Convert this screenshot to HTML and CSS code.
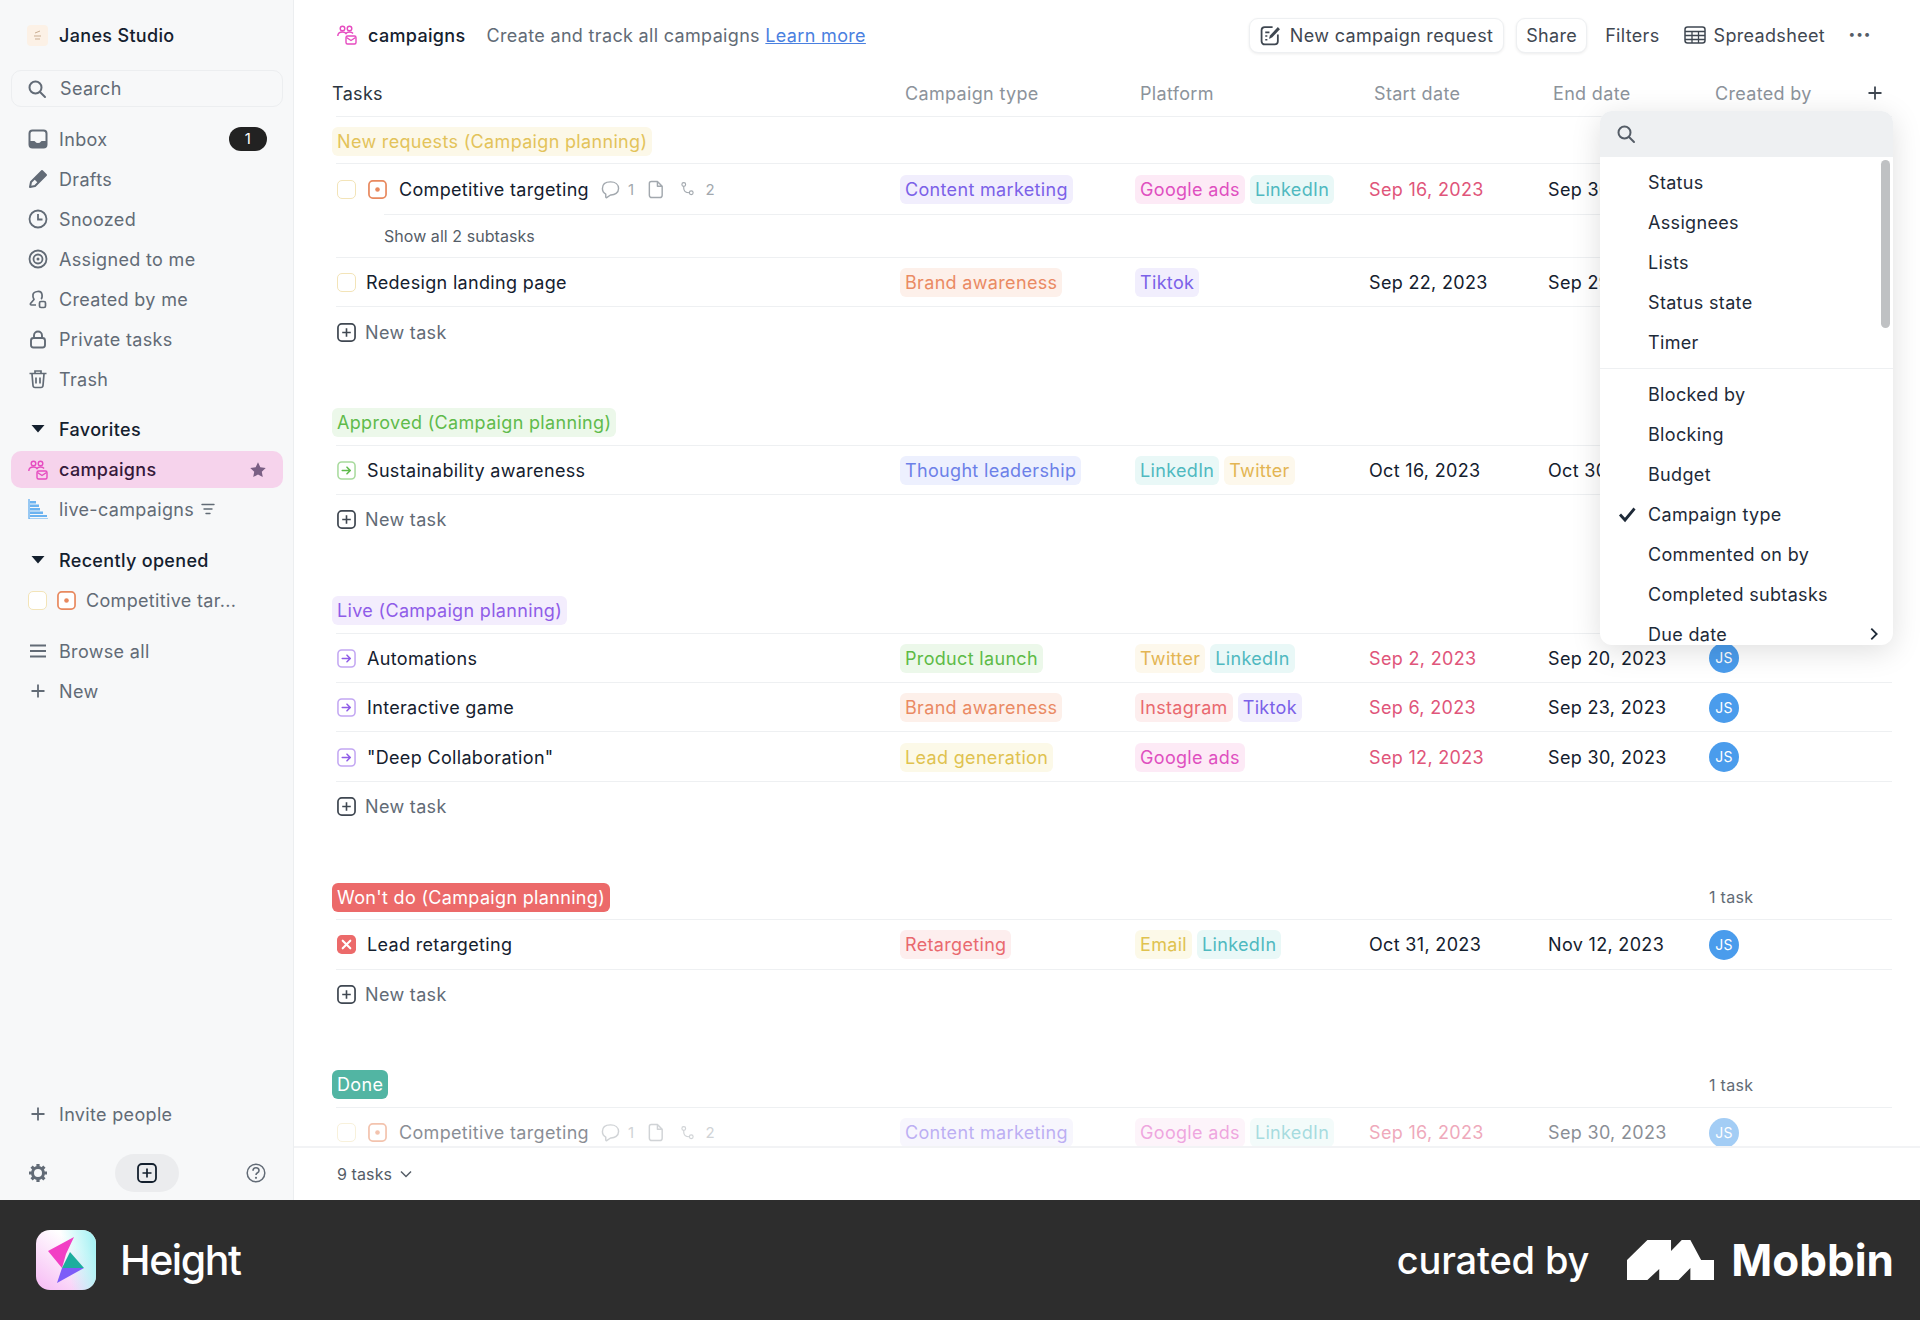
FILE: index.html
```html
<!DOCTYPE html>
<html>
<head>
    <title>campaigns - Height</title>
    <link rel="stylesheet" href="styles.css">
</head>
<body>
    <svg class="sprite" width="0" height="0">
        <symbol id="i-search" viewBox="0 0 20 20"><circle cx="8.5" cy="8.5" r="6" fill="none" stroke="currentColor" stroke-width="2"/><path d="M13 13l5 5" stroke="currentColor" stroke-width="2" stroke-linecap="round"/></symbol>
        <symbol id="i-inbox" viewBox="0 0 20 20"><rect x="1.5" y="1.5" width="17" height="17" rx="3" fill="none" stroke="currentColor" stroke-width="2"/><path d="M1.5 12H6q1 0 1.5 1t2.5 1 2.5-1 1.5-1h4.500v4a2.500 2.500 0 0 1-2.500 2.500H4A2.500 2.500 0 0 1 1.500 16z" fill="currentColor"/></symbol>
        <symbol id="i-pencil" viewBox="0 0 20 20"><path d="M14 2l4 4L7 17l-5 1 1-5z" fill="none" stroke="currentColor" stroke-width="2" stroke-linejoin="round"/><path d="M14 2l4 4-8 8-4-4z" fill="currentColor"/></symbol>
        <symbol id="i-clock" viewBox="0 0 20 20"><circle cx="10" cy="10" r="8.500" fill="none" stroke="currentColor" stroke-width="1.800"/><path d="M10 5v5.500h4.500" fill="none" stroke="currentColor" stroke-width="1.800"/></symbol>
        <symbol id="i-target" viewBox="0 0 20 20"><circle cx="10" cy="10" r="8.500" fill="none" stroke="currentColor" stroke-width="1.800"/><circle cx="10" cy="10" r="4.500" fill="none" stroke="currentColor" stroke-width="1.800"/><circle cx="10" cy="10" r="1.500" fill="currentColor"/></symbol>
        <symbol id="i-creator" viewBox="0 0 20 20"><path d="M8 16H3.500q-1.500 0-1-1.500L6 10.500Q4.500 8 5 5.500T9.500 2.500 14 5.500 13 10" fill="none" stroke="currentColor" stroke-width="1.700" stroke-linejoin="round"/><rect x="11.500" y="12.500" width="6" height="6" rx="1.500" fill="none" stroke="currentColor" stroke-width="1.700"/></symbol>
        <symbol id="i-lock" viewBox="0 0 20 20"><rect x="3" y="9" width="14" height="9.500" rx="2.500" fill="none" stroke="currentColor" stroke-width="1.900"/><path d="M6 9V6.500a4 4 0 0 1 8 0V9" fill="none" stroke="currentColor" stroke-width="1.900"/></symbol>
        <symbol id="i-trash" viewBox="0 0 20 20"><path d="M1.500 4.500h17M7 4V2h6v2M4 5l1 11.500q.2 2 2 2h6q1.800 0 2-2L16 5M8 8.500v6M12 8.500v6" fill="none" stroke="currentColor" stroke-width="1.700"/></symbol>
        <symbol id="i-caret" viewBox="0 0 20 20"><path d="M3.500 6h13L10 13.500z" fill="currentColor"/></symbol>
        <symbol id="i-campaign" viewBox="0 0 20 20"><g fill="none" stroke="currentColor" stroke-width="1.400"><circle cx="5.500" cy="3.500" r="2.300"/><circle cx="12.500" cy="3.500" r="2.300"/><path d="M.8 11q0-4 4.700-4 2.500 0 3.500 1.500Q10 7 12.500 7q2.500 0 3.500 1.500"/><rect x="9" y="11" width="10" height="8" rx="1.500"/><path d="M9.500 12.500L14 15.500l4.500-3"/></g></symbol>
        <symbol id="i-bars" viewBox="0 0 20 20"><path d="M1 0v20h19" fill="none" stroke="currentColor" stroke-width="1.200"/><path d="M2 2h6v2.500H2zM2 5.500h9V8H2zM2 9h10v2.500H2zM2 12.500h13V15H2zM2 16h17v2H2z" fill="currentColor" opacity=".88"/></symbol>
        <symbol id="i-filter" viewBox="0 0 14 12"><path d="M1 1.500h12M3 6h8M5 10.500h4" stroke="currentColor" stroke-width="1.400" stroke-linecap="round"/></symbol>
        <symbol id="i-star" viewBox="0 0 20 20"><path d="M10 1.500l2.600 5.500 6 .8-4.400 4.100 1.100 6L10 15l-5.300 2.900 1.100-6L1.400 7.800l6-.8z" fill="currentColor"/></symbol>
        <symbol id="i-target-task" viewBox="0 0 20 20"><rect x="1" y="1" width="18" height="18" rx="4" fill="#fff" stroke="currentColor" stroke-width="1.800"/><circle cx="10" cy="10" r="2.400" fill="currentColor"/></symbol>
        <symbol id="i-arrow-task" viewBox="0 0 20 20"><rect x="1" y="1" width="18" height="18" rx="4" fill="none" stroke="currentColor" stroke-opacity=".55" stroke-width="1.600"/><path d="M5.500 10h8.500M10.500 6.500L14 10l-3.500 3.500" fill="none" stroke="currentColor" stroke-width="1.600" stroke-linecap="round" stroke-linejoin="round"/></symbol>
        <symbol id="i-x-task" viewBox="0 0 20 20"><rect x="0" y="0" width="20" height="20" rx="5" fill="currentColor"/><path d="M6 6l8 8M14 6l-8 8" stroke="#fff" stroke-width="2.200" stroke-linecap="round"/></symbol>
        <symbol id="i-comment" viewBox="0 0 20 20"><path d="M10 2c5 0 8.500 2.700 8.500 7s-4 7-8.500 6.800L6 18.500q-1 .5-1-1v-2.700Q1.500 13 1.500 9 1.500 2 10 2z" fill="none" stroke="currentColor" stroke-width="1.500" stroke-linejoin="round"/></symbol>
        <symbol id="i-doc" viewBox="0 0 16 20"><path d="M3 1.500h6.500l5 5V16a2.500 2.500 0 0 1-2.500 2.500H3.500A2.500 2.500 0 0 1 1 16V3.500q0-2 2-2zM9.500 1.500v5h5" fill="none" stroke="currentColor" stroke-width="1.500" stroke-linejoin="round"/></symbol>
        <symbol id="i-subtask" viewBox="0 0 20 20"><circle cx="5" cy="4" r="2.500" fill="none" stroke="currentColor" stroke-width="1.500"/><circle cx="15" cy="15" r="2.500" fill="none" stroke="currentColor" stroke-width="1.500"/><path d="M5 6.500V9q0 6 7.500 6" fill="none" stroke="currentColor" stroke-width="1.500"/></symbol>
        <symbol id="i-form" viewBox="0 0 20 20"><path d="M17 9v6.500a3 3 0 0 1-3 3H4.500a3 3 0 0 1-3-3V5a3 3 0 0 1 3-3H12" fill="none" stroke="currentColor" stroke-width="1.700"/><path d="M5 7h4M5 10.500h2M5 14h2" stroke="currentColor" stroke-width="1.500"/><path d="M17 2l2 2-7.500 8-3 1 1-3z" fill="currentColor"/></symbol>
        <symbol id="i-sheet" viewBox="0 0 22 20"><rect x="1" y="2" width="20" height="16" rx="2.500" fill="none" stroke="currentColor" stroke-width="1.500"/><path d="M1 6.500h20M1 10.500h20M1 14.500h20M8 6.500V18M14.500 6.500V18" stroke="currentColor" stroke-width="1.300"/></symbol>
        <symbol id="i-menu" viewBox="0 0 20 20"><path d="M2 4.500h16M2 10h16M2 15.500h16" stroke="currentColor" stroke-width="2"/></symbol>
        <symbol id="i-plus" viewBox="0 0 20 20"><path d="M10 3.500v13M3.500 10h13" stroke="currentColor" stroke-width="1.800"/></symbol>
        <symbol id="i-gear" viewBox="0 0 20 20"><circle cx="10" cy="10" r="5.500" fill="none" stroke="currentColor" stroke-width="3"/><path d="M10 1v3M10 16v3M1 10h3M16 10h3M3.600 3.600l2.200 2.200M14.200 14.200l2.200 2.200M3.600 16.400l2.200-2.200M14.200 5.800l2.200-2.200" stroke="currentColor" stroke-width="3.200"/></symbol>
        <symbol id="i-plus-box" viewBox="0 0 20 20"><rect x="1" y="1" width="18" height="18" rx="4" fill="none" stroke="currentColor" stroke-width="1.800"/><path d="M10 5.500v9M5.500 10h9" stroke="currentColor" stroke-width="1.700"/></symbol>
        <symbol id="i-help" viewBox="0 0 20 20"><circle cx="10" cy="10" r="8.800" fill="none" stroke="currentColor" stroke-width="1.500"/><path d="M7 7.800q0-3 3-3t3 2.700q0 1.500-1.500 2.300T10 12" fill="none" stroke="currentColor" stroke-width="1.600"/><circle cx="10" cy="14.800" r="1.100" fill="currentColor"/></symbol>
        <symbol id="i-check" viewBox="0 0 20 20"><path d="M3 10.500l5 5.500L17.500 4.500" fill="none" stroke="currentColor" stroke-width="2.800"/></symbol>
        <symbol id="i-chevron-right" viewBox="0 0 20 20"><path d="M7 4l6 6-6 6" fill="none" stroke="currentColor" stroke-width="2"/></symbol>
        <symbol id="i-chevron-down" viewBox="0 0 14 14"><path d="M2 4.500l5 5 5-5" fill="none" stroke="currentColor" stroke-width="1.500"/></symbol>
    </svg>

    <div class="app">
        <aside class="sidebar">
            <div class="workspace">
                <svg class="workspace-logo" viewBox="0 0 21 21"><rect width="21" height="21" rx="4" fill="#fcf1e6"/><path d="M8 8l5-2M7 11h7M8 14h5" stroke="#c9ad92" stroke-width="1"/></svg>
                <span>Janes Studio</span>
            </div>
            <div class="search-box">
                <svg class="icon"><use href="#i-search"/></svg>
                <span>Search</span>
            </div>
            <nav class="nav-list">
                <div class="nav-item"><svg class="icon"><use href="#i-inbox"/></svg><span>Inbox</span><span class="badge">1</span></div>
                <div class="nav-item"><svg class="icon"><use href="#i-pencil"/></svg><span>Drafts</span></div>
                <div class="nav-item"><svg class="icon"><use href="#i-clock"/></svg><span>Snoozed</span></div>
                <div class="nav-item"><svg class="icon"><use href="#i-target"/></svg><span>Assigned to me</span></div>
                <div class="nav-item"><svg class="icon"><use href="#i-creator"/></svg><span>Created by me</span></div>
                <div class="nav-item"><svg class="icon"><use href="#i-lock"/></svg><span>Private tasks</span></div>
                <div class="nav-item"><svg class="icon"><use href="#i-trash"/></svg><span>Trash</span></div>
            </nav>
            <div class="nav-title"><svg class="icon"><use href="#i-caret"/></svg><span>Favorites</span></div>
            <div class="nav-item active"><svg class="icon pink"><use href="#i-campaign"/></svg><span>campaigns</span><svg class="star"><use href="#i-star"/></svg></div>
            <div class="nav-item"><svg class="icon blue"><use href="#i-bars"/></svg><span>live-campaigns</span><svg class="filter"><use href="#i-filter"/></svg></div>
            <div class="nav-title recent"><svg class="icon"><use href="#i-caret"/></svg><span>Recently opened</span></div>
            <div class="nav-item recent-item"><span class="checkbox"></span><svg class="icon orange"><use href="#i-target-task"/></svg><span>Competitive tar...</span></div>
            <div class="nav-item browse"><svg class="icon"><use href="#i-menu"/></svg><span>Browse all</span></div>
            <div class="nav-item"><svg class="icon"><use href="#i-plus"/></svg><span>New</span></div>
            <div class="nav-item invite"><svg class="icon"><use href="#i-plus"/></svg><span>Invite people</span></div>
            <div class="side-bottom">
                <svg class="icon"><use href="#i-gear"/></svg>
                <span class="new-pill"><svg class="icon"><use href="#i-plus-box"/></svg></span>
                <svg class="icon"><use href="#i-help"/></svg>
            </div>
        </aside>

        <main class="main">
            <header class="topbar">
                <svg class="icon pink"><use href="#i-campaign"/></svg>
                <span class="list-name">campaigns</span>
                <span class="list-desc">Create and track all campaigns <a href="#">Learn more</a></span>
                <div class="top-actions">
                    <button class="btn request"><svg class="icon"><use href="#i-form"/></svg>New campaign request</button>
                    <button class="btn share">Share</button>
                    <span class="action filters">Filters</span>
                    <span class="action sheet"><svg class="icon sheet-icon"><use href="#i-sheet"/></svg>Spreadsheet</span>
                    <span class="dots">&middot;&middot;&middot;</span>
                </div>
            </header>

            <div class="board">
                <div class="columns">
                    <span class="col-tasks">Tasks</span>
                    <span class="col">Campaign type</span>
                    <span class="col">Platform</span>
                    <span class="col">Start date</span>
                    <span class="col">End date</span>
                    <span class="col col-last">Created by<svg class="add-col"><use href="#i-plus"/></svg></span>
                </div>

                <section class="group">
                    <div class="group-head"><span class="label l-new">New requests (Campaign planning)</span></div>
                    <div class="row no-line">
                        <div class="task"><span class="checkbox"></span><svg class="icon orange"><use href="#i-target-task"/></svg><span class="task-name">Competitive targeting</span>
                            <span class="meta"><svg class="meta-icon"><use href="#i-comment"/></svg><span>1</span><svg class="meta-doc"><use href="#i-doc"/></svg><svg class="meta-icon sub"><use href="#i-subtask"/></svg><span>2</span></span></div>
                        <div class="tags"><span class="tag t-violet">Content marketing</span></div>
                        <div class="tags"><span class="tag t-pink">Google ads</span><span class="tag t-teal">LinkedIn</span></div>
                        <div class="date late">Sep 16, 2023</div>
                        <div class="date">Sep 30, 2023</div>
                        <div><span class="avatar">JS</span></div>
                    </div>
                    <div class="subtasks"><div class="subtasks-link">Show all 2 subtasks</div></div>
                    <div class="row">
                        <div class="task"><span class="checkbox"></span><span class="task-name">Redesign landing page</span></div>
                        <div class="tags"><span class="tag t-orange">Brand awareness</span></div>
                        <div class="tags"><span class="tag t-violet">Tiktok</span></div>
                        <div class="date">Sep 22, 2023</div>
                        <div class="date">Sep 29, 2023</div>
                        <div><span class="avatar">JS</span></div>
                    </div>
                    <div class="new-task"><svg class="icon"><use href="#i-plus-box"/></svg>New task</div>
                </section>

                <section class="group">
                    <div class="group-head"><span class="label l-approved">Approved (Campaign planning)</span></div>
                    <div class="row">
                        <div class="task"><svg class="icon green"><use href="#i-arrow-task"/></svg><span class="task-name">Sustainability awareness</span></div>
                        <div class="tags"><span class="tag t-blue">Thought leadership</span></div>
                        <div class="tags"><span class="tag t-teal">LinkedIn</span><span class="tag t-amber">Twitter</span></div>
                        <div class="date">Oct 16, 2023</div>
                        <div class="date">Oct 30, 2023</div>
                        <div><span class="avatar">JS</span></div>
                    </div>
                    <div class="new-task"><svg class="icon"><use href="#i-plus-box"/></svg>New task</div>
                </section>

                <section class="group">
                    <div class="group-head"><span class="label l-live">Live (Campaign planning)</span></div>
                    <div class="row">
                        <div class="task"><svg class="icon purple"><use href="#i-arrow-task"/></svg><span class="task-name">Automations</span></div>
                        <div class="tags"><span class="tag t-green">Product launch</span></div>
                        <div class="tags"><span class="tag t-amber">Twitter</span><span class="tag t-teal">LinkedIn</span></div>
                        <div class="date late">Sep 2, 2023</div>
                        <div class="date">Sep 20, 2023</div>
                        <div><span class="avatar">JS</span></div>
                    </div>
                    <div class="row">
                        <div class="task"><svg class="icon purple"><use href="#i-arrow-task"/></svg><span class="task-name">Interactive game</span></div>
                        <div class="tags"><span class="tag t-orange">Brand awareness</span></div>
                        <div class="tags"><span class="tag t-red">Instagram</span><span class="tag t-violet">Tiktok</span></div>
                        <div class="date late">Sep 6, 2023</div>
                        <div class="date">Sep 23, 2023</div>
                        <div><span class="avatar">JS</span></div>
                    </div>
                    <div class="row">
                        <div class="task"><svg class="icon purple"><use href="#i-arrow-task"/></svg><span class="task-name">"Deep Collaboration"</span></div>
                        <div class="tags"><span class="tag t-yellow">Lead generation</span></div>
                        <div class="tags"><span class="tag t-pink">Google ads</span></div>
                        <div class="date late">Sep 12, 2023</div>
                        <div class="date">Sep 30, 2023</div>
                        <div><span class="avatar">JS</span></div>
                    </div>
                    <div class="new-task"><svg class="icon"><use href="#i-plus-box"/></svg>New task</div>
                </section>

                <section class="group">
                    <div class="group-head"><span class="label l-wont">Won't do (Campaign planning)</span><span class="count">1 task</span></div>
                    <div class="row">
                        <div class="task"><svg class="icon red"><use href="#i-x-task"/></svg><span class="task-name">Lead retargeting</span></div>
                        <div class="tags"><span class="tag t-red">Retargeting</span></div>
                        <div class="tags"><span class="tag t-yellow">Email</span><span class="tag t-teal">LinkedIn</span></div>
                        <div class="date">Oct 31, 2023</div>
                        <div class="date">Nov 12, 2023</div>
                        <div><span class="avatar">JS</span></div>
                    </div>
                    <div class="new-task"><svg class="icon"><use href="#i-plus-box"/></svg>New task</div>
                </section>

                <section class="group">
                    <div class="group-head"><span class="label l-done">Done</span><span class="count">1 task</span></div>
                    <div class="row faded">
                        <div class="task"><span class="checkbox"></span><svg class="icon orange"><use href="#i-target-task"/></svg><span class="task-name">Competitive targeting</span>
                            <span class="meta"><svg class="meta-icon"><use href="#i-comment"/></svg><span>1</span><svg class="meta-doc"><use href="#i-doc"/></svg><svg class="meta-icon sub"><use href="#i-subtask"/></svg><span>2</span></span></div>
                        <div class="tags"><span class="tag t-violet">Content marketing</span></div>
                        <div class="tags"><span class="tag t-pink">Google ads</span><span class="tag t-teal">LinkedIn</span></div>
                        <div class="date late">Sep 16, 2023</div>
                        <div class="date">Sep 30, 2023</div>
                        <div><span class="avatar">JS</span></div>
                    </div>
                </section>
            </div>

            <div class="summary">9 tasks<svg class="chevron"><use href="#i-chevron-down"/></svg></div>

            <div class="column-menu">
                <div class="menu-search"><svg class="icon"><use href="#i-search"/></svg></div>
                <div class="menu-list">
                    <div class="menu-item">Status</div>
                    <div class="menu-item">Assignees</div>
                    <div class="menu-item">Lists</div>
                    <div class="menu-item">Status state</div>
                    <div class="menu-item">Timer</div>
                    <div class="menu-sep"></div>
                    <div class="menu-item">Blocked by</div>
                    <div class="menu-item">Blocking</div>
                    <div class="menu-item">Budget</div>
                    <div class="menu-item"><svg class="menu-check"><use href="#i-check"/></svg>Campaign type</div>
                    <div class="menu-item">Commented on by</div>
                    <div class="menu-item">Completed subtasks</div>
                    <div class="menu-item">Due date<svg class="menu-more"><use href="#i-chevron-right"/></svg></div>
                </div>
                <div class="scroll-thumb"></div>
            </div>
        </main>
    </div>

    <footer class="brand-bar">
        <svg class="height-logo" viewBox="0 0 60 60">
            <defs>
                <linearGradient id="logo-pink" x1="0" y1="1" x2="0.6" y2="0.2">
                    <stop offset="0" stop-color="#f6b9f4"/>
                    <stop offset="1" stop-color="#ffffff"/>
                </linearGradient>
                <linearGradient id="logo-cyan" x1="1" y1="0.4" x2="0.5" y2="0.5">
                    <stop offset="0" stop-color="#a9f2f4"/>
                    <stop offset="1" stop-color="#a9f2f4" stop-opacity="0"/>
                </linearGradient>
            </defs>
            <rect width="60" height="60" rx="14" fill="url(#logo-pink)"/>
            <rect width="60" height="60" rx="14" fill="url(#logo-cyan)"/>
            <polygon points="12,21 38,7 30,24 26,38" fill="#f23fc4"/>
            <polygon points="34,22 48,38 26,38" fill="#1cae9e"/>
            <polygon points="26,38 48,38 21,53" fill="#7d5cf8"/>
        </svg>
        <span class="height-name">Height</span>
        <span class="curated">curated by</span>
        <svg class="mobbin-logo" viewBox="0 0 81 40" preserveAspectRatio="none"><polygon points="0,40 0,20 19,0 41,0 41,11 51,0 59,0 69,20 81,20 81,40 59,40 59,28 48,40 30,40 30,29 19,40" fill="#fff"/></svg>
        <span class="mobbin-name">Mobbin</span>
    </footer>
</body>
</html>
```

FILE: styles.css
```css
* {
    box-sizing: border-box;
}
body {
    margin: 0;
    font-family: Inter, "Liberation Sans", sans-serif;
    font-size: 18px;
    letter-spacing: .33px;
    color: #14202e;
    background: #fff;
}
.sprite {
    position: absolute;
}
.app {
    display: flex;
    height: 1200px;
}
.icon {
    width: 20px;
    height: 20px;
    flex: none;
}
.pink { color: #e64bc0; }
.blue { color: #58a9ee; }
.orange { color: #e8895f; }
.green { color: #5fbb4b; }
.purple { color: #8f5ce8; }
.red { color: #ec6a6a; }

/* sidebar */
.sidebar {
    width: 294px;
    flex: none;
    display: flex;
    flex-direction: column;
    background: #f7f8f9;
    border-right: 1px solid #eceef0;
    padding: 0 10px 0 11px;
    color: #626b76;
}
.workspace {
    height: 70px;
    display: flex;
    align-items: center;
    gap: 11px;
    padding-left: 16px;
    color: #14202e;
    font-weight: 500;
}
.workspace-logo {
    width: 21px;
    height: 21px;
}
.search-box {
    height: 37px;
    display: flex;
    align-items: center;
    gap: 13px;
    padding-left: 15px;
    border: 1px solid #eceef0;
    border-radius: 10px;
    margin-bottom: 12px;
}
.nav-item {
    height: 40px;
    flex: none;
    display: flex;
    align-items: center;
    gap: 11px;
    padding: 0 16px 0 17px;
    white-space: nowrap;
}
.badge {
    margin-left: auto;
    width: 38px;
    height: 24px;
    border-radius: 12px;
    background: #222;
    color: #fff;
    font-size: 15px;
    text-align: center;
    line-height: 24px;
}
.nav-title {
    height: 40px;
    flex: none;
    display: flex;
    align-items: center;
    gap: 11px;
    padding-left: 17px;
    margin-top: 10px;
    color: #14202e;
    font-weight: 500;
}
.nav-title.recent {
    margin-top: 11px;
}
.active {
    height: 37px;
    margin: 2px 0 1px;
    background: #f6d3ec;
    border-radius: 10px;
    color: #35193a;
    font-weight: 500;
}
.star {
    width: 18px;
    height: 18px;
    margin-left: auto;
    color: #7a5f84;
}
.filter {
    width: 14px;
    height: 12px;
    margin-left: -4px;
}
.recent-item {
    gap: 10px;
}
.recent-item .icon {
    width: 19px;
    height: 19px;
}
.browse {
    margin-top: 11px;
}
.invite {
    margin-top: auto;
    margin-bottom: 12px;
}
.side-bottom {
    height: 54px;
    flex: none;
    display: flex;
    align-items: center;
    justify-content: space-between;
    padding: 0 17px;
}
.side-bottom > .icon {
    width: 20px;
    height: 20px;
    color: #626b76;
}
.new-pill {
    width: 64px;
    height: 38px;
    border-radius: 19px;
    background: #ebecee;
    display: flex;
    align-items: center;
    justify-content: center;
    color: #14202e;
}

/* main column */
.main {
    flex: 1;
    min-width: 0;
    position: relative;
    display: flex;
    flex-direction: column;
}
.topbar {
    height: 70px;
    flex: none;
    display: flex;
    align-items: center;
    padding: 0 49px 0 43px;
}
.list-name {
    margin-left: 11px;
    font-weight: 500;
}
.list-desc {
    margin-left: 21px;
    color: #626b76;
}
.list-desc a {
    color: #4a80e0;
}
.top-actions {
    margin-left: auto;
    display: flex;
    align-items: center;
    color: #3f4751;
}
.btn {
    height: 35px;
    padding: 0 9px;
    display: flex;
    align-items: center;
    gap: 8px;
    background: #fff;
    border: 1px solid #eef0f2;
    border-radius: 9px;
    box-shadow: 0 1px 3px rgba(0, 0, 0, .08);
    font: inherit;
    letter-spacing: inherit;
    color: inherit;
}
.request {
    padding: 0 10px;
    gap: 9px;
}
.request .icon {
    width: 21px;
    height: 21px;
}
.share {
    margin-left: 12px;
}
.filters {
    margin-left: 18px;
}
.sheet {
    margin-left: 24px;
    display: flex;
    align-items: center;
    gap: 8px;
}
.sheet-icon {
    width: 22px;
}
.dots {
    margin-left: 23px;
    font-size: 24px;
    line-height: 20px;
    font-weight: 600;
    letter-spacing: 0;
    color: #555d67;
}
.board {
    flex: 1;
    min-height: 0;
    overflow: hidden;
    padding: 0 28px 0 42px;
}
.columns, .row, .group-head {
    display: grid;
    grid-template-columns: 564px 235px 234px 179px 160px 184px;
    align-items: center;
}
.columns {
    height: 47px;
    border-bottom: 1px solid #eef0f2;
    color: #8c939b;
}
.col-tasks {
    margin-left: -4px;
    color: #2b3540;
}
.col {
    padding-left: 5px;
}
.col-last {
    padding-left: 7px;
    display: flex;
    align-items: center;
}
.add-col {
    width: 20px;
    height: 20px;
    margin-left: auto;
    margin-right: 7px;
    color: #3f4751;
}

/* groups and rows */
.group {
    margin-bottom: 42px;
}
.group-head {
    height: 47px;
    border-bottom: 1px solid #eef0f2;
    padding-top: 2px;
}
.label {
    justify-self: start;
    height: 29px;
    line-height: 29px;
    margin-left: -4px;
    padding: 0 5px;
    border-radius: 6px;
}
.l-new { background: #fcf8e8; color: #e3c35a; }
.l-approved { background: #ecf8ea; color: #5fbb4b; }
.l-live { background: #f3edfd; color: #8f5ce8; }
.l-wont { background: #ec6a6a; color: #fff; }
.l-done { background: #52b5a3; color: #fff; }
.count {
    grid-column: 6;
    font-size: 16px;
    letter-spacing: .3px;
    color: #626b76;
    padding-left: 1px;
}
.row {
    height: 49.4px;
    padding-top: 1px;
    border-bottom: 1px solid #eef0f2;
}
.row.no-line {
    height: 50px;
    padding-top: 0;
    border-bottom: 0;
}
.row.faded {
    opacity: .5;
}
.task {
    display: flex;
    align-items: center;
    gap: 11px;
    padding-left: 1px;
    white-space: nowrap;
}
.task > .icon {
    width: 19px;
    height: 19px;
}
.task > .orange {
    margin: 0 1px;
}
.checkbox + .task-name {
    margin-left: -1px;
}
.checkbox {
    width: 19px;
    height: 19px;
    flex: none;
    border: 1.5px solid #f3e4b8;
    border-radius: 5px;
    background: #fff;
}
.meta {
    display: flex;
    align-items: center;
    font-size: 15px;
    color: #a2a8ae;
    margin-left: 1px;
}
.meta-icon {
    width: 19px;
    height: 19px;
    margin-right: 8px;
}
.meta-doc {
    width: 16px;
    height: 19px;
    margin: 0 16px 0 14px;
}
.meta-icon.sub {
    width: 15px;
    height: 16px;
    margin-right: 10px;
}
.tags {
    display: flex;
    gap: 5px;
}
.tag {
    height: 29px;
    line-height: 29px;
    padding: 0 5px;
    border-radius: 6px;
    white-space: nowrap;
}
.t-violet { background: #f1eefd; color: #7b61e8; }
.t-pink { background: #fdeaf6; color: #df4fc0; }
.t-teal { background: #e9f8f7; color: #4fb9c0; }
.t-orange { background: #fdf0ea; color: #ea8a63; }
.t-blue { background: #edf0fe; color: #6c80e8; }
.t-amber { background: #fdf8ec; color: #e3b553; }
.t-green { background: #ecf8ea; color: #5dbb46; }
.t-red { background: #fdeeee; color: #e9696e; }
.t-yellow { background: #fcf9e8; color: #e0c24f; }
.date {
    white-space: nowrap;
}
.late {
    color: #e0557a;
}
.avatar {
    display: block;
    width: 30px;
    height: 30px;
    margin-left: 1px;
    border-radius: 50%;
    background: #4a9cec;
    color: #fff;
    font-size: 14px;
    line-height: 30px;
    text-align: center;
}
.subtasks {
    height: 44px;
    border-bottom: 1px solid #eef0f2;
}
.subtasks-link {
    height: 43px;
    margin-left: 48px;
    border-top: 1px solid #eef0f2;
    font-size: 16px;
    letter-spacing: .05px;
    line-height: 42px;
    color: #555d67;
}
.new-task {
    height: 49.4px;
    display: flex;
    align-items: center;
    gap: 9px;
    padding-left: 1px;
    color: #626b76;
}
.new-task .icon {
    width: 19px;
    height: 19px;
    color: #3f4751;
}

/* bottom summary */
.summary {
    height: 54px;
    flex: none;
    display: flex;
    align-items: center;
    gap: 7px;
    padding-left: 43px;
    border-top: 2px solid #f2f3f5;
    background: #fff;
    font-size: 16px;
    letter-spacing: .1px;
    color: #555d67;
}
.chevron {
    width: 14px;
    height: 14px;
}

/* add column menu */
.column-menu {
    position: absolute;
    top: 111px;
    left: 1306px;
    width: 293px;
    height: 534px;
    overflow: hidden;
    background: #fff;
    border-radius: 12px;
    box-shadow: 0 6px 30px rgba(0, 0, 0, .13);
}
.menu-search {
    height: 46px;
    display: flex;
    align-items: center;
    padding-left: 16px;
    background: #eef0f2;
    color: #555d67;
}
.menu-list {
    padding-top: 5px;
}
.menu-item {
    height: 40px;
    display: flex;
    align-items: center;
    position: relative;
    padding-left: 48px;
    color: #1e2a38;
}
.menu-sep {
    height: 1px;
    margin: 6px 0 5px;
    background: #eef0f2;
}
.menu-check {
    position: absolute;
    left: 17px;
    top: 10px;
    width: 20px;
    height: 20px;
}
.menu-more {
    position: absolute;
    right: 10px;
    top: 10px;
    width: 18px;
    height: 20px;
}
.scroll-thumb {
    position: absolute;
    top: 49px;
    right: 3px;
    width: 9px;
    height: 168px;
    border-radius: 5px;
    background: #bfc1c3;
}

/* brand footer */
.brand-bar {
    height: 120px;
    display: flex;
    align-items: center;
    padding: 0 26px 0 36px;
    background: #2d2d2d;
    color: #fff;
}
.height-logo {
    width: 60px;
    height: 60px;
}
.height-name {
    margin-left: 24px;
    font-size: 41px;
    font-weight: 500;
    letter-spacing: -1.4px;
}
.curated {
    margin-left: auto;
    font-size: 38px;
    font-weight: 500;
    letter-spacing: -.15px;
}
.mobbin-logo {
    width: 87px;
    height: 40px;
    margin-left: 38px;
}
.mobbin-name {
    margin-left: 17px;
    font-size: 44px;
    font-weight: 700;
    letter-spacing: 0;
}
```
